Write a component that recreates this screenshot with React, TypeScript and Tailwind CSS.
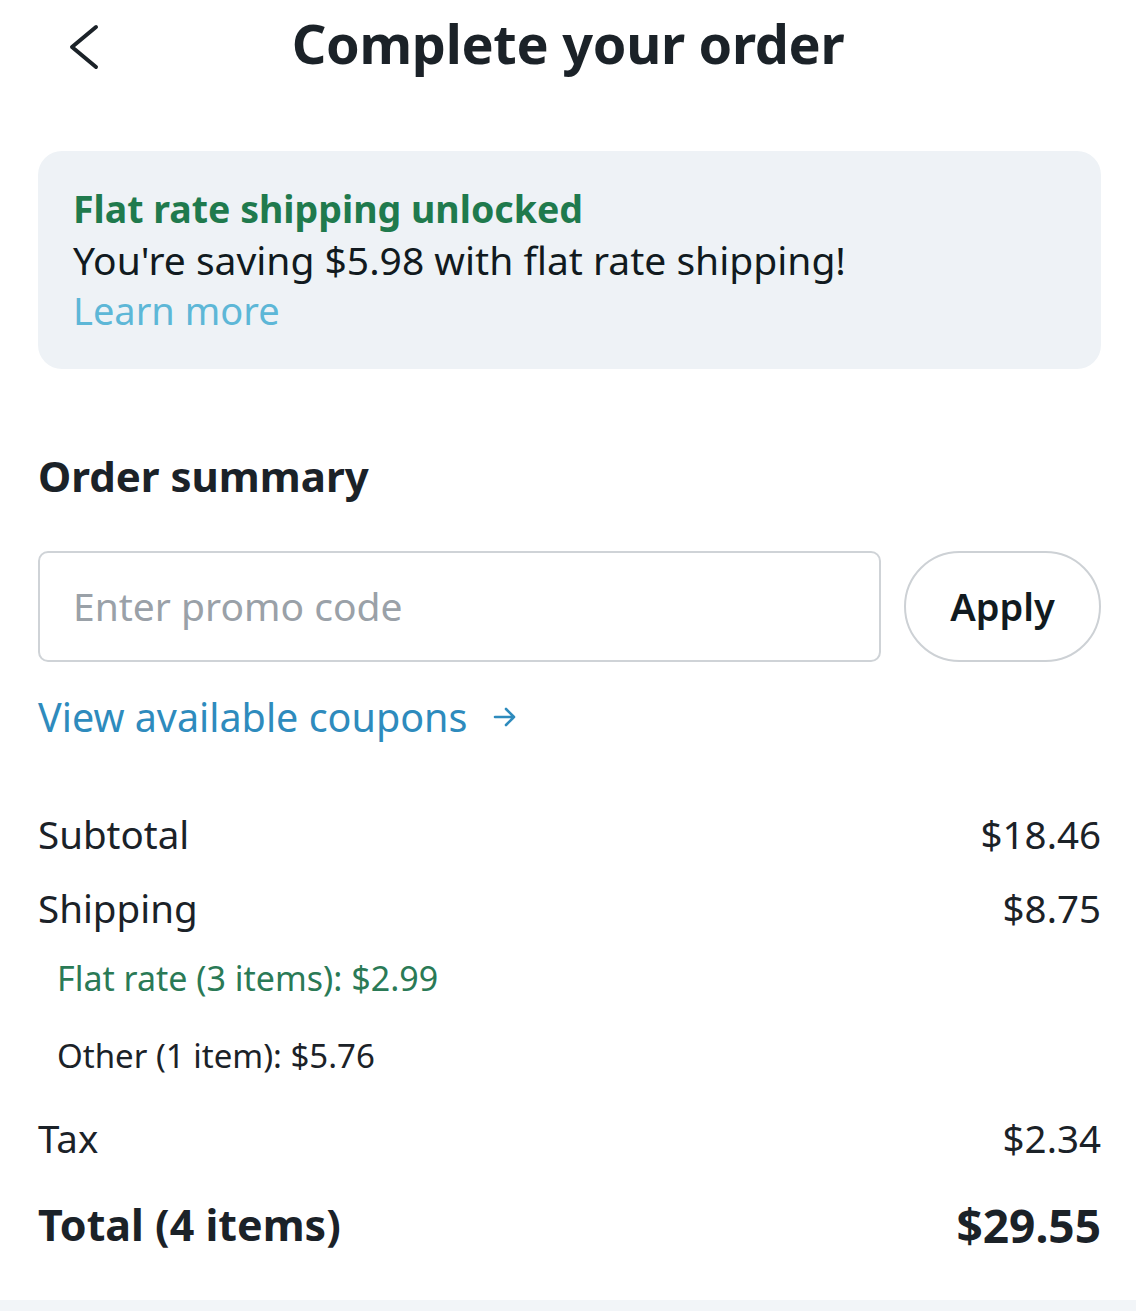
import React from "react";

export default function App() {
  const font = { fontFamily: '"Noto Sans", "Open Sans", sans-serif' };
  return (
    <div className="w-[1136px] h-[1311px] bg-white flex flex-col text-[#1b2228] overflow-hidden" style={font}>
      <div className="relative h-[94px] flex items-center justify-center">
        <svg className="absolute left-[66px] top-[24px]" width="36" height="46" viewBox="0 0 36 46" fill="none">
          <path d="M30 3 L6 23 L30 43" stroke="#1b2228" strokeWidth="4" strokeLinecap="round" strokeLinejoin="round" />
        </svg>
        <h1 className="text-[54px] font-bold tracking-[-0.3px] leading-none mt-[-8px]">Complete your order</h1>
      </div>

      <div className="pl-[38px] pr-[35px] pt-[57px]">
        <div className="bg-[#eef2f6] rounded-[24px] h-[218px] pl-[35px] pt-[33px] flex flex-col">
          <div className="text-[37.5px] font-bold text-[#1f7a4d] leading-[50px]">Flat rate shipping unlocked</div>
          <div className="text-[39px] leading-[51px] text-[#111a20]">You're saving $5.98 with flat rate shipping!</div>
          <div className="text-[38px] leading-[50px] text-[#5db7d7]">Learn more</div>
        </div>

        <div className="mt-[86px] text-[42px] font-bold leading-none">Order summary</div>

        <div className="mt-[54px] flex gap-[23px]">
          <div className="w-[843px] h-[111px] border-2 border-[#cfd3d7] rounded-[10px] flex items-center pl-[33px] text-[39px] text-[#9aa1a8]">
            Enter promo code
          </div>
          <div className="flex-1 h-[111px] border-2 border-[#cdd1d5] rounded-full flex items-center justify-center text-[38px] font-semibold text-[#111a20]">
            Apply
          </div>
        </div>

        <div className="mt-[30px] flex items-center text-[39.5px] text-[#2e8bbd] leading-[50px]">
          <span>View available coupons</span>
          <svg className="ml-[26px]" width="24" height="22" viewBox="0 0 24 22" fill="none">
            <path d="M2 11 H21 M13 3 L21 11 L13 19" stroke="#2e8bbd" strokeWidth="2.6" strokeLinecap="round" strokeLinejoin="round" />
          </svg>
        </div>

        <div className="mt-[67px] flex flex-col text-[38.5px] leading-[50px]">
          <div className="flex justify-between">
            <span>Subtotal</span>
            <span>$18.46</span>
          </div>
          <div className="flex justify-between mt-[24px]">
            <span>Shipping</span>
            <span>$8.75</span>
          </div>
          <div className="pl-[19px] mt-[20px] text-[34px] text-[#2a7a56]">Flat rate (3 items): $2.99</div>
          <div className="pl-[19px] mt-[28px] text-[33px]">Other (1 item): $5.76</div>
          <div className="flex justify-between mt-[32px]">
            <span>Tax</span>
            <span>$2.34</span>
          </div>
          <div className="flex justify-between mt-[37px] text-[43px] font-bold">
            <span>Total (4 items)</span>
            <span className="text-[46px]">$29.55</span>
          </div>
        </div>
      </div>
      <div className="mt-auto h-[11px] bg-[#f2f5f8]" />
    </div>
  );
}
